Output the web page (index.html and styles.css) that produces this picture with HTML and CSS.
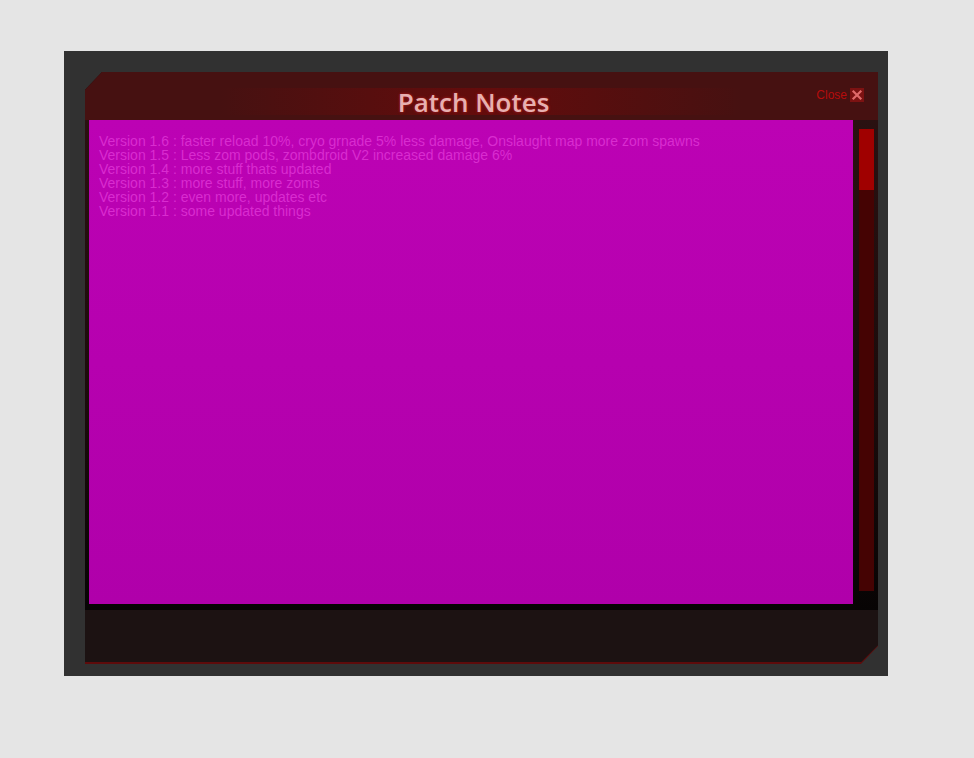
FILE: index.html
```html
<!DOCTYPE html>
<html>
<head>
<meta charset="utf-8">
<title>Patch Notes</title>
<link rel="stylesheet" href="styles.css">
</head>
<body>
<div class="frame">
  <div class="panel">
    <div class="panel-inner">
      <div class="header">
        <div class="title">Patch Notes</div>
        <div class="close">
          <span class="close-label">Close</span>
          <span class="close-box">
            <svg width="14" height="14" viewBox="0 0 14 14"><path d="M3.5 3.5 L10.5 10.5 M10.5 3.5 L3.5 10.5" stroke="#e06a6a" stroke-width="2.2" stroke-linecap="square"/></svg>
          </span>
        </div>
      </div>
      <div class="body">
        <div class="content">
          <div class="line">Version 1.6 : faster reload 10%, cryo grnade 5% less damage, Onslaught map more zom spawns</div>
          <div class="line">Version 1.5 : Less zom pods, zombdroid V2 increased damage 6%</div>
          <div class="line">Version 1.4 : more stuff thats updated</div>
          <div class="line">Version 1.3 : more stuff, more zoms</div>
          <div class="line">Version 1.2 : even more, updates etc</div>
          <div class="line">Version 1.1 : some updated things</div>
        </div>
        <div class="scroll">
          <div class="track"><div class="thumb"></div></div>
        </div>
      </div>
      <div class="footer"></div>
    </div>
  </div>
</div>
</body>
</html>
```
FILE: styles.css
```css
html, body {
  margin: 0;
  padding: 0;
}
body {
  background: #e5e5e5;
  width: 974px;
  height: 758px;
  overflow: hidden;
}
.frame {
  margin: 51px 0 0 64px;
  width: 824px;
  height: 625px;
  box-sizing: border-box;
  background: #313131;
  padding: 21px 10px 12px 21px;
}
.panel {
  width: 793px;
  height: 592px;
  background: #5e0b0b;
  padding-bottom: 2px;
  box-sizing: border-box;
  clip-path: polygon(17px 0, 100% 0, 100% calc(100% - 18px), calc(100% - 17px) 100%, 0 100%, 0 18px);
}
.panel-inner {
  height: 100%;
  display: flex;
  flex-direction: column;
  clip-path: polygon(0 0, 100% 0, 100% calc(100% - 17px), calc(100% - 17px) 100%, 0 100%);
  background: #1c1212;
}
.header {
  height: 48px;
  flex: none;
  position: relative;
  background: #461111;
  display: flex;
  align-items: flex-start;
  justify-content: center;
  padding-right: 16px;
}
.header::before {
  content: "";
  position: absolute;
  left: 0;
  right: 0;
  top: 16px;
  height: 27px;
  background: linear-gradient(to right, rgba(110, 10, 10, 0) 17%, rgba(110, 10, 10, 0.75) 50%, rgba(110, 10, 10, 0) 83%);
}
.title {
  position: relative;
  margin-top: 13px;
  font-family: "Open Sans", sans-serif;
  font-weight: 600;
  font-size: 26px;
  line-height: 34px;
  color: #e6b0b0;
  text-shadow: 0 0 3px rgba(255, 40, 40, 0.6);
}
.close {
  position: absolute;
  right: 14px;
  top: 16px;
  display: flex;
  align-items: center;
  gap: 3px;
}
.close-label {
  font-family: "Liberation Sans", Arial, sans-serif;
  font-size: 12px;
  color: #b60c0c;
}
.close-box {
  width: 14px;
  height: 14px;
  background: #7c1212;
  display: block;
}
.close-box svg {
  display: block;
}
.body {
  height: 490px;
  flex: none;
  display: flex;
  background: linear-gradient(to bottom, #2a1111 0, #1a0b0b 60%, #070404 100%);
}
.content {
  margin-left: 4px;
  width: 764px;
  height: 484px;
  box-sizing: border-box;
  padding: 14px 10px;
  background: linear-gradient(to bottom, #bc02b4, #b000aa);
  font-family: "Liberation Sans", Arial, sans-serif;
  font-size: 14px;
  line-height: 14px;
  color: #d92cd0;
}
.scroll {
  width: 25px;
  padding: 9px 4px 0 6px;
  box-sizing: border-box;
}
.track {
  width: 15px;
  height: 462px;
  background: #450303;
}
.thumb {
  height: 61px;
  background: #a00000;
}
.footer {
  flex: 1;
  background: #1c1212;
}
```
